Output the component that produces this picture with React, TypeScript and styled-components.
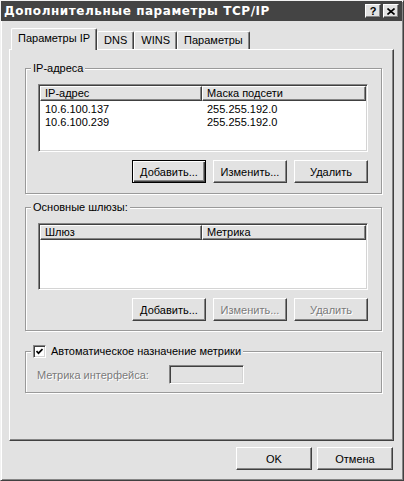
import React from "react";
import styled, { createGlobalStyle } from "styled-components";

const BG = "#e2e2e2";
const DARK = "#404040";
const MID = "#858585";
const GRAY_TEXT = "#7a7a7a";

const Global = createGlobalStyle`
  html, body { margin: 0; padding: 0; background: ${BG}; }
  body { font-family: "Liberation Sans", Arial, sans-serif; font-size: 11px; color: #000; }
  * { box-sizing: border-box; }
`;

const Window = styled.div`
  width: 404px;
  height: 481px;
  background: ${BG};
  border-top: 1px solid #f2f2f2;
  border-left: 1px solid #f2f2f2;
  border-right: 1px solid ${DARK};
  border-bottom: 1px solid ${DARK};
  box-shadow: inset 1px 1px 0 #fff, inset -1px -1px 0 ${MID};
  padding: 1px 2px 2px 1px;
  display: flex;
  flex-direction: column;
`;

const TitleBar = styled.div`
  height: 20px;
  background: #444;
  display: flex;
  align-items: center;
  padding: 0 3px 0 3px;
  margin: -1px -1px 0 -1px;
`;

const Title = styled.div`
  flex: 1;
  color: #fff;
  font-family: "DejaVu Sans", Verdana, sans-serif;
  font-weight: bold;
  font-size: 12px;
  letter-spacing: 0.55px;
  white-space: nowrap;
`;

const TitleBtn = styled.div`
  width: 16px;
  height: 14px;
  margin-left: 2px;
  background: ${BG};
  border-top: 1px solid #fff;
  border-left: 1px solid #fff;
  border-right: 1px solid ${DARK};
  border-bottom: 1px solid ${DARK};
  box-shadow: inset -1px -1px 0 ${MID};
  display: flex;
  align-items: center;
  justify-content: center;
  font-weight: bold;
  font-size: 11px;
  line-height: 1;
  color: #000;
`;

const Body = styled.div`
  flex: 1;
  display: flex;
  flex-direction: column;
  padding: 7px 7px 0 7px;
`;

const TabRow = styled.div`
  display: flex;
  align-items: flex-end;
  padding-left: 2px;
  height: 21px;
  position: relative;
  z-index: 1;
`;

const Tab = styled.div<{ $active?: boolean }>`
  height: ${(p) => (p.$active ? 22 : 18)}px;
  padding: ${(p) => (p.$active ? "3px 6px 0" : "2px 6px 0")};
  margin-bottom: ${(p) => (p.$active ? -1 : 0)}px;
  background: ${BG};
  border-top: 1px solid #fff;
  border-left: 1px solid #fff;
  border-right: 1px solid ${DARK};
  border-top-left-radius: 2px;
  border-top-right-radius: 2px;
  box-shadow: inset -1px 0 0 ${MID};
  white-space: nowrap;
  line-height: 13px;
`;

const Panel = styled.div`
  width: 385px;
  height: 392px;
  border-top: 1px solid #fff;
  border-left: 1px solid #fff;
  border-right: 1px solid ${DARK};
  border-bottom: 1px solid ${DARK};
  box-shadow: inset -1px -1px 0 ${MID};
  padding-left: 15px;
  display: flex;
  flex-direction: column;
`;

const Group = styled.div<{ $top: number; $h: number }>`
  position: relative;
  margin-top: ${(p) => p.$top}px;
  width: 357px;
  height: ${(p) => p.$h}px;
  border: 1px solid #9a9a9a;
  box-shadow: inset 1px 1px 0 #fff, 1px 1px 0 #fff;
  display: flex;
  flex-direction: column;
`;

const Legend = styled.div`
  position: absolute;
  top: -7px;
  left: 5px;
  padding: 0 2px;
  background: ${BG};
  line-height: 13px;
  display: flex;
  align-items: center;
  white-space: nowrap;
`;

const GroupInner = styled.div`
  padding: 15px 13px 0 12px;
  display: flex;
  flex-direction: column;
`;

const List = styled.div<{ $h: number }>`
  height: ${(p) => p.$h}px;
  background: #fff;
  border-top: 1px solid ${MID};
  border-left: 1px solid ${MID};
  border-right: 1px solid #fff;
  border-bottom: 1px solid #fff;
  box-shadow: inset 1px 1px 0 ${DARK}, inset -1px -1px 0 #d4d4d4;
  padding: 1px;
  display: flex;
  flex-direction: column;
`;

const ListRow = styled.div`
  display: grid;
  grid-template-columns: 162px 1fr;
  height: 13px;
  line-height: 13px;
`;

const HeaderRow = styled.div`
  display: grid;
  grid-template-columns: 162px 1fr;
  height: 15px;
  margin-bottom: 2px;
`;

const HeadCell = styled.div`
  background: ${BG};
  border-top: 1px solid #fff;
  border-left: 1px solid #fff;
  border-right: 1px solid ${DARK};
  border-bottom: 1px solid ${DARK};
  box-shadow: inset -1px -1px 0 ${MID};
  padding-left: 4px;
  line-height: 13px;
  white-space: nowrap;
`;

const Cell = styled.div<{ $pad: number }>`
  padding-left: ${(p) => p.$pad}px;
  white-space: nowrap;
`;

const ButtonRow = styled.div<{ $gap: number; $top: number }>`
  display: flex;
  justify-content: flex-end;
  gap: ${(p) => p.$gap}px;
  margin-top: ${(p) => p.$top}px;
`;

const Button = styled.div<{ $w: number; $h: number; $default?: boolean; $disabled?: boolean }>`
  width: ${(p) => p.$w}px;
  height: ${(p) => p.$h}px;
  background: ${BG};
  display: flex;
  align-items: center;
  justify-content: center;
  color: ${(p) => (p.$disabled ? GRAY_TEXT : "#000")};
  text-shadow: ${(p) => (p.$disabled ? "1px 1px 0 #fff" : "none")};
  border-top: 1px solid ${(p) => (p.$default ? "#000" : "#fff")};
  border-left: 1px solid ${(p) => (p.$default ? "#000" : "#fff")};
  border-right: 1px solid ${(p) => (p.$default ? "#000" : DARK)};
  border-bottom: 1px solid ${(p) => (p.$default ? "#000" : DARK)};
  box-shadow: ${(p) =>
    p.$default
      ? `inset 1px 1px 0 #fff, inset -1px -1px 0 ${DARK}, inset -2px -2px 0 ${MID}`
      : `inset -1px -1px 0 ${MID}`};
  white-space: nowrap;
`;

const CheckBox = styled.div`
  width: 13px;
  height: 13px;
  background: #fff;
  border-top: 1px solid ${MID};
  border-left: 1px solid ${MID};
  border-right: 1px solid #fff;
  border-bottom: 1px solid #fff;
  box-shadow: inset 1px 1px 0 ${DARK}, inset -1px -1px 0 #d4d4d4;
  display: flex;
  align-items: center;
  justify-content: center;
  margin-right: 5px;
`;

const MetricRow = styled.div`
  display: flex;
  align-items: center;
  padding: 13px 0 0 11px;
`;

const MetricLabel = styled.div`
  width: 132px;
  color: ${GRAY_TEXT};
  text-shadow: 1px 1px 0 #fff;
  white-space: nowrap;
`;

const MetricInput = styled.div`
  width: 75px;
  height: 19px;
  background: ${BG};
  border-top: 1px solid ${MID};
  border-left: 1px solid ${MID};
  border-right: 1px solid #fff;
  border-bottom: 1px solid #fff;
  box-shadow: inset 1px 1px 0 ${DARK}, inset -1px -1px 0 #d4d4d4;
`;

const Footer = styled.div`
  display: flex;
  justify-content: flex-end;
  gap: 5px;
  margin-top: 6px;
  padding-right: 1px;
`;

export default function App() {
  return (
    <>
      <Global />
      <Window>
        <TitleBar>
          <Title>Дополнительные параметры TCP/IP</Title>
          <TitleBtn>?</TitleBtn>
          <TitleBtn>
            <svg width="8" height="7" viewBox="0 0 8 7">
              <path d="M0.5 0.5 L7.5 6.5 M7.5 0.5 L0.5 6.5" stroke="#000" strokeWidth="1.6" />
            </svg>
          </TitleBtn>
        </TitleBar>
        <Body>
          <TabRow>
            <Tab $active>Параметры IP</Tab>
            <Tab>DNS</Tab>
            <Tab>WINS</Tab>
            <Tab>Параметры</Tab>
          </TabRow>
          <Panel>
            <Group $top={18} $h={126}>
              <Legend>IP-адреса</Legend>
              <GroupInner>
                <List $h={68}>
                  <HeaderRow>
                    <HeadCell>IP-адрес</HeadCell>
                    <HeadCell>Маска подсети</HeadCell>
                  </HeaderRow>
                  <ListRow>
                    <Cell $pad={5}>10.6.100.137</Cell>
                    <Cell $pad={5}>255.255.192.0</Cell>
                  </ListRow>
                  <ListRow>
                    <Cell $pad={5}>10.6.100.239</Cell>
                    <Cell $pad={5}>255.255.192.0</Cell>
                  </ListRow>
                </List>
                <ButtonRow $gap={7} $top={8}>
                  <Button $w={74} $h={23} $default>Добавить...</Button>
                  <Button $w={74} $h={23}>Изменить...</Button>
                  <Button $w={74} $h={23}>Удалить</Button>
                </ButtonRow>
              </GroupInner>
            </Group>
            <Group $top={13} $h={124}>
              <Legend>Основные шлюзы:</Legend>
              <GroupInner>
                <List $h={67}>
                  <HeaderRow>
                    <HeadCell>Шлюз</HeadCell>
                    <HeadCell>Метрика</HeadCell>
                  </HeaderRow>
                </List>
                <ButtonRow $gap={7} $top={8}>
                  <Button $w={74} $h={23}>Добавить...</Button>
                  <Button $w={74} $h={23} $disabled>Изменить...</Button>
                  <Button $w={74} $h={23} $disabled>Удалить</Button>
                </ButtonRow>
              </GroupInner>
            </Group>
            <Group $top={20} $h={42}>
              <Legend>
                <CheckBox>
                  <svg width="7" height="7" viewBox="0 0 7 7">
                    <path d="M0.5 3 L2.5 5.2 L6.5 1" stroke="#000" strokeWidth="1.7" fill="none" />
                  </svg>
                </CheckBox>
                Автоматическое назначение метрики
              </Legend>
              <MetricRow>
                <MetricLabel>Метрика интерфейса:</MetricLabel>
                <MetricInput />
              </MetricRow>
            </Group>
          </Panel>
          <Footer>
            <Button $w={76} $h={23}>OK</Button>
            <Button $w={76} $h={23}>Отмена</Button>
          </Footer>
        </Body>
      </Window>
    </>
  );
}
